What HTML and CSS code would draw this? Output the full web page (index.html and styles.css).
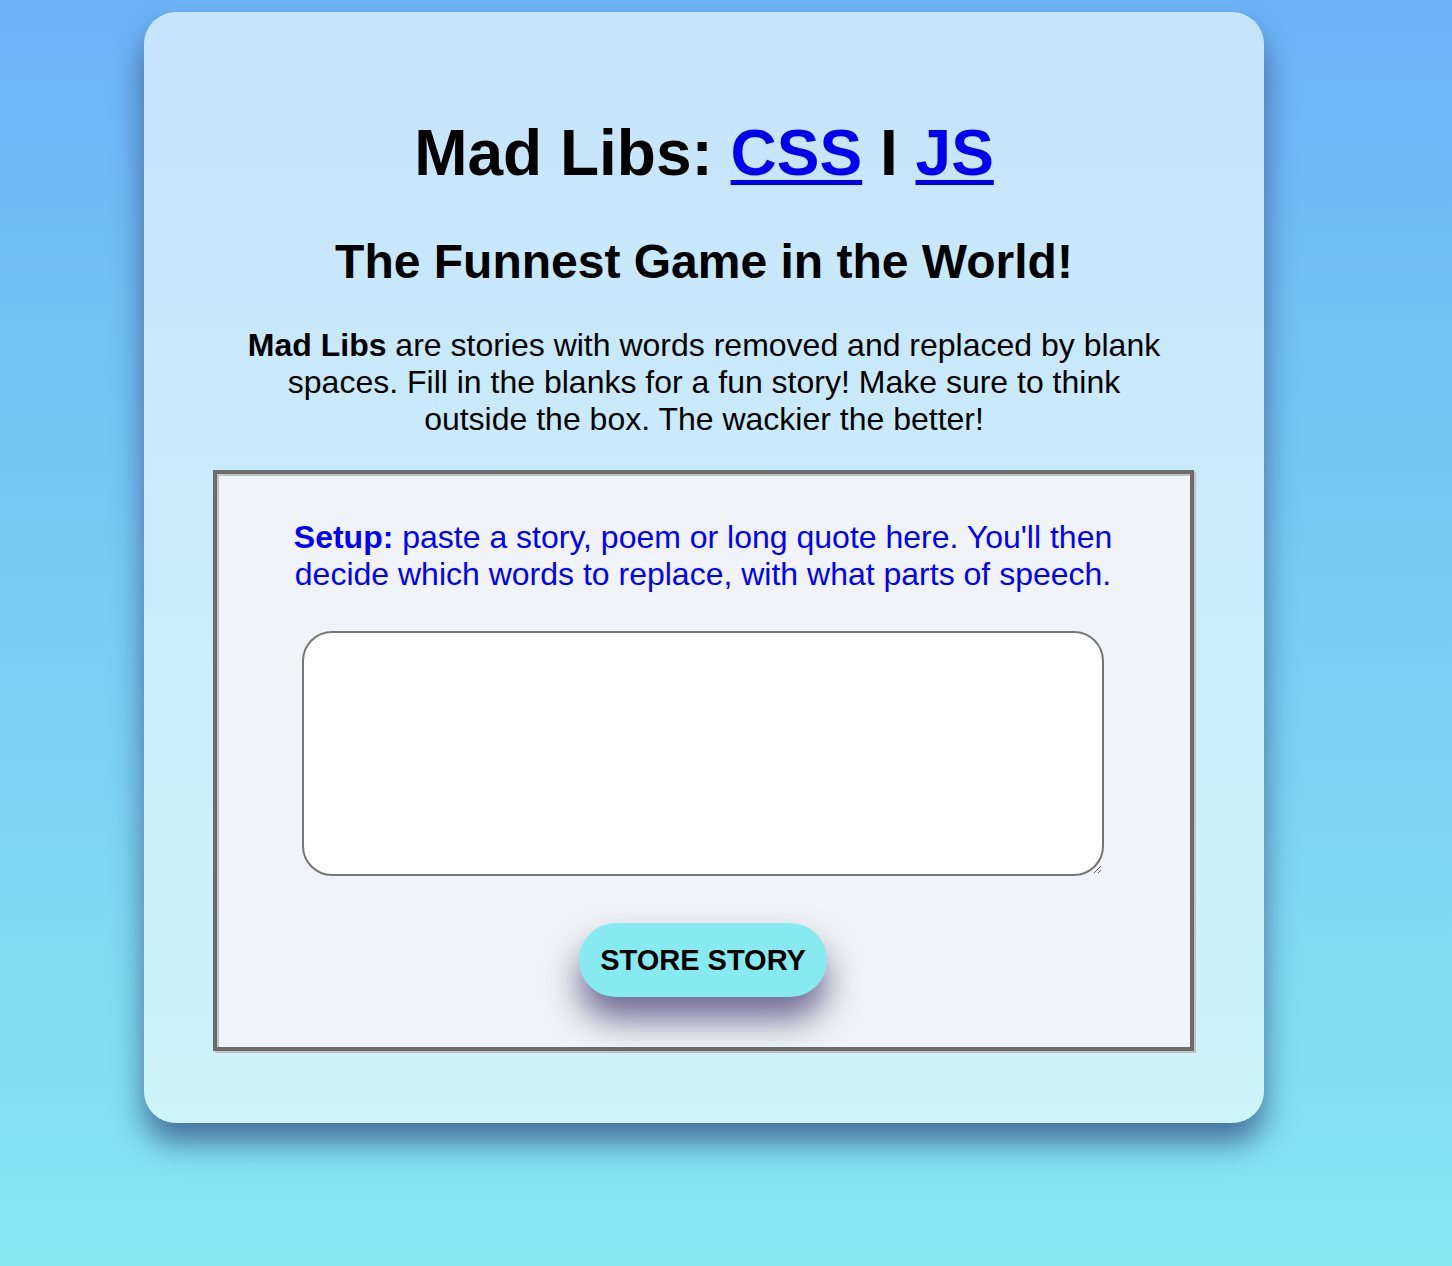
FILE: index.html
```html
<!DOCTYPE html>
<html>
<head>
<meta charset="utf-8">
<title>Mad Libs</title>
<link rel="stylesheet" href="styles.css">
</head>
<body>
<main class="card">
  <h1 class="title">Mad Libs: <a href="#">CSS</a> I <a href="#">JS</a></h1>
  <h2 class="subtitle">The Funnest Game in the World!</h2>
  <p class="intro"><strong>Mad Libs</strong> are stories with words removed and replaced by blank spaces. Fill in the blanks for a fun story! Make sure to think outside the box. The wackier the better!</p>
  <section class="setup">
    <p class="setup-text"><strong>Setup:</strong> paste a story, poem or long quote here. You'll then decide which words to replace, with what parts of speech.</p>
    <textarea class="story"></textarea>
    <button class="store">STORE STORY</button>
  </section>
</main>
</body>
</html>
```
FILE: styles.css
```css
html {
  min-height: 100%;
  background: linear-gradient(to bottom, #6cb3f6 0%, #86e7f1 100%);
}
body {
  margin: 0;
  min-height: 1266px;
  font-family: "Liberation Sans", Arial, sans-serif;
  color: #000;
}
.card {
  width: 1120px;
  box-sizing: border-box;
  margin: 12px 0 0 144px;
  padding: 104px 0 72px;
  border-radius: 32px;
  background: linear-gradient(to bottom, #c6e4fb 0%, #cdf4f9 100%);
  box-shadow: 0 20px 30px rgba(30, 40, 100, 0.6);
  display: flex;
  flex-direction: column;
  align-items: center;
  text-align: center;
}
.title {
  margin: 0;
  font-size: 64px;
  font-weight: bold;
  line-height: 74px;
}
.title a {
  color: #0000ee;
  text-decoration: underline;
  text-decoration-thickness: 5px;
  text-underline-offset: 5px;
}
.subtitle {
  margin: 44px 0 0;
  font-size: 48px;
  line-height: 55px;
  font-weight: bold;
}
.intro {
  margin: 38px 0 0;
  width: 930px;
  font-size: 32px;
  line-height: 37px;
}
.setup {
  margin-top: 32px;
  width: 981px;
  box-sizing: border-box;
  border-style: solid;
  border-width: 4px;
  border-color: #6c6c6c;
  box-shadow: inset 2px 2px 0 #c2c2c2, 2px 2px 0 #c2c2c2;
  background: #f0f4f8;
  padding: 45px 0 50px;
  display: flex;
  flex-direction: column;
  align-items: center;
  margin-right: 2px;
}
.setup-text {
  margin: 0;
  width: 840px;
  color: #0000ff;
  font-size: 32px;
  line-height: 37px;
}
.story {
  margin-top: 38px;
  width: 802px;
  height: 245px;
  box-sizing: border-box;
  border: 2px solid #767676;
  border-radius: 30px;
  background: #fff;
  resize: both;
  font-family: "Liberation Sans", Arial, sans-serif;
  font-size: 20px;
}
.store {
  margin-top: 47px;
  width: 248px;
  height: 74px;
  border: none;
  border-radius: 37px;
  background: #86eaf0;
  color: #000;
  font-family: "Liberation Sans", Arial, sans-serif;
  font-weight: bold;
  font-size: 29px;
  box-shadow: 0 22px 34px rgba(40, 30, 90, 0.65);
  cursor: pointer;
}
```
